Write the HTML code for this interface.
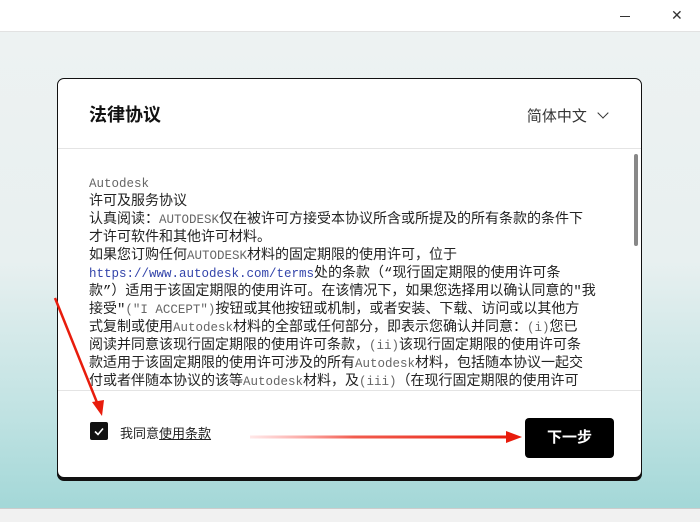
<!DOCTYPE html>
<html><head><meta charset="utf-8"><style>
*{margin:0;padding:0;box-sizing:border-box}
body{width:700px;height:522px;overflow:hidden;position:relative;font-family:"Liberation Sans","Noto Sans CJK SC",sans-serif;background:linear-gradient(180deg,#eef2f2 0%,#e8f0f0 50%,#bfe2e2 80%,#9fd6d6 100%)}
.title{position:absolute;left:0;top:0;width:700px;height:32px;background:#fff;border-bottom:1px solid #e2e2e2}
.bottom{position:absolute;left:0;top:508px;width:700px;height:14px;background:#f1f1f1;border-top:1px solid #ccc}
.dlg{position:absolute;left:57px;top:78px;width:585px;height:400px;background:#fff;border:1px solid #111;border-radius:7px;box-shadow:0 3px 0 #111}
.h{position:absolute;left:31px;top:22px;font-size:18px;font-weight:bold;color:#111}
.lang{position:absolute;right:30px;top:26px;font-size:15px;color:#333}
.sep{position:absolute;left:0;width:583px;height:1px;background:#e4e4e4}
.txt{position:absolute;left:31px;top:96px;width:520px;font-size:14px;line-height:18px;color:#222;font-family:"Liberation Mono","Noto Sans CJK SC",monospace;white-space:nowrap}
.m{color:#666;font-size:12.5px}
.sb{position:absolute;left:576px;top:75px;width:4px;height:92px;background:#888;border-radius:2px}
.cb{position:absolute;left:32px;top:343px;width:18px;height:18px;background:#111;border-radius:2px}
.lab{position:absolute;left:62px;top:344px;font-size:13px;color:#222}
.lab u{text-decoration:underline}
.btn{position:absolute;left:467px;top:339px;width:89px;height:40px;background:#000;border-radius:4px;color:#fff;font-size:15px;font-weight:bold;text-align:center;line-height:40px}
</style></head><body>
<div class="title"><div style="position:absolute;left:620px;top:16px;width:10px;height:1px;background:#333"></div><div style="position:absolute;left:671px;top:7px;font-size:14px;color:#333">✕</div></div>
<div class="bottom"></div>
<div class="dlg">
<div class="h">法律协议</div>
<div class="lang">简体中文 <span style="display:inline-block;width:8px;height:8px;border-right:1.5px solid #333;border-bottom:1.5px solid #333;transform:rotate(45deg);margin:0 4px 4px 8px"></span></div>
<div class="sep" style="top:69px"></div>
<div class="txt"><span class="m">Autodesk</span><br>许可及服务协议<br>认真阅读：<span class="m">AUTODESK</span>仅在被许可方接受本协议所含或所提及的所有条款的条件下<br>才许可软件和其他许可材料。<br>如果您订购任何<span class="m">AUTODESK</span>材料的固定期限的使用许可，位于<br><span class="m" style="color:#3344aa">https://www.autodesk.com/terms</span>处的条款（“现行固定期限的使用许可条<br>款”）适用于该固定期限的使用许可。在该情况下，如果您选择用以确认同意的"我<br>接受"<span class="m">("I ACCEPT")</span>按钮或其他按钮或机制，或者安装、下载、访问或以其他方<br>式复制或使用<span class="m">Autodesk</span>材料的全部或任何部分，即表示您确认并同意：<span class="m">(i)</span>您已<br>阅读并同意该现行固定期限的使用许可条款，<span class="m">(ii)</span>该现行固定期限的使用许可条<br>款适用于该固定期限的使用许可涉及的所有<span class="m">Autodesk</span>材料，包括随本协议一起交<br>付或者伴随本协议的该等<span class="m">Autodesk</span>材料，及<span class="m">(iii)</span>（在现行固定期限的使用许可</div>
<div class="sep" style="top:312px"></div>
<div class="sb"></div>
<div class="cb"><svg width="18" height="18"><path d="M5 9.5l3 3 5-6" stroke="#fff" stroke-width="1.6" fill="none"/></svg></div>
<div class="lab">我同意<u>使用条款</u></div>
<div class="btn">下一步</div>
</div>
<div style="position:absolute;left:58px;top:391px;width:583px;height:13px;background:#fff"></div>
<div style="position:absolute;left:58px;top:390px;width:583px;height:1px;background:#e4e4e4"></div>
<svg style="position:absolute;left:0;top:0" width="700" height="522">
<defs><linearGradient id="g" x1="250" x2="510" gradientUnits="userSpaceOnUse"><stop offset="0" stop-color="#f66" stop-opacity="0.15"/><stop offset="0.4" stop-color="#ee3322" stop-opacity="0.8"/><stop offset="1" stop-color="#e81c0c"/></linearGradient></defs>
<path d="M55 298 L98 405" stroke="#e81c0c" stroke-width="2.5"/>
<path d="M92 402 L102 416 L104 400 Z" fill="#e81c0c"/>
<path d="M250 437 L508 437" stroke="url(#g)" stroke-width="3"/>
<path d="M506 431 L522 437 L506 443 Z" fill="#e81c0c"/>
</svg>
</body></html>
